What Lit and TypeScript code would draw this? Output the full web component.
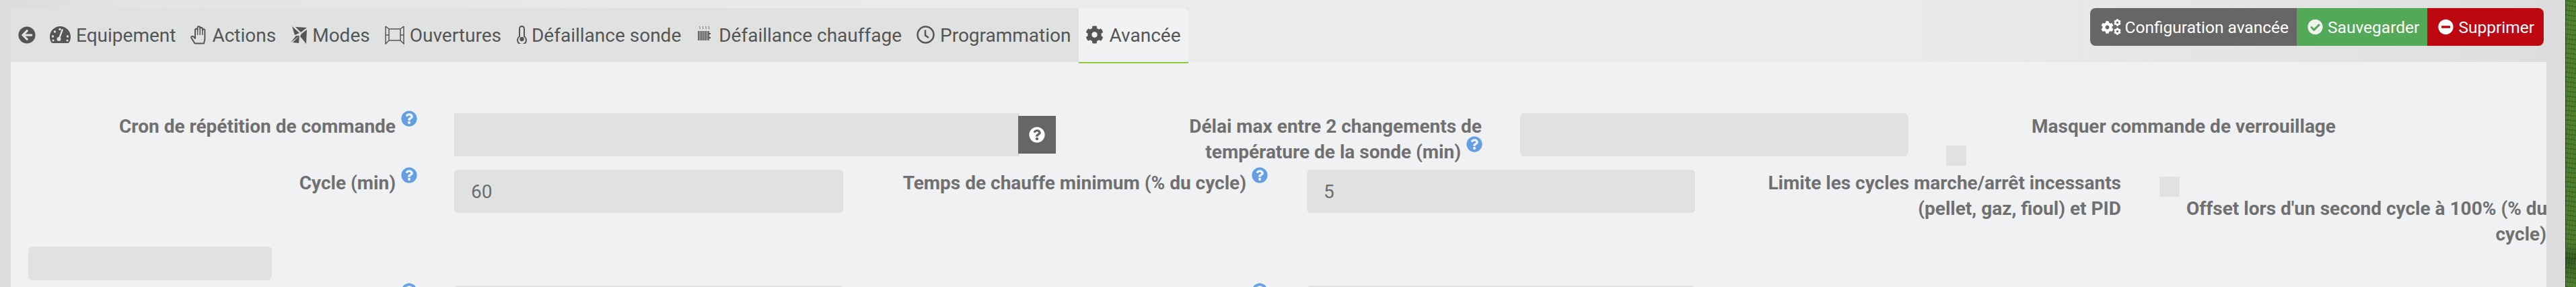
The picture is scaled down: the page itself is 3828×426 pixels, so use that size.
import { LitElement, html, css } from "lit";
import { customElement } from "lit/decorators.js";

const CIRCLE_LEFT = "M256 504C119 504 8 393 8 256S119 8 256 8s248 111 248 248-111 248-248 248zm28.9-143.6L209.4 288H392c13.3 0 24-10.7 24-24v-16c0-13.3-10.7-24-24-24H209.4l75.5-72.4c9.7-9.3 9.9-24.8.4-34.3l-11-10.9c-9.4-9.4-24.6-9.4-33.9 0L107.7 239c-9.4 9.4-9.4 24.6 0 33.9l132.7 132.7c9.4 9.4 24.6 9.4 33.9 0l11-10.9c9.5-9.5 9.3-25-.4-34.3z";
const CHECK = "M504 256c0 136.967-111.033 248-248 248S8 392.967 8 256 119.033 8 256 8s248 111.033 248 248zM227.314 387.314l184-184c6.248-6.248 6.248-16.379 0-22.627l-22.627-22.627c-6.248-6.249-16.379-6.249-22.628 0L216 308.118l-70.059-70.059c-6.248-6.248-16.379-6.248-22.628 0l-22.627 22.627c-6.248 6.248-6.248 16.379 0 22.627l104 104c6.249 6.249 16.379 6.249 22.628.001z";
const MINUS = "M256 8C119 8 8 119 8 256s111 248 248 248 248-111 248-248S393 8 256 8zM124 296c-6.6 0-12-5.4-12-12v-56c0-6.6 5.4-12 12-12h264c6.6 0 12 5.4 12 12v56c0 6.6-5.4 12-12 12H124z";
const QUESTION = "M504 256c0 136.997-111.043 248-248 248S8 392.997 8 256C8 119.083 119.043 8 256 8s248 111.083 248 248zM262.655 90c-54.497 0-89.255 22.957-116.549 63.758-3.536 5.286-2.353 12.415 2.715 16.258l34.699 26.31c5.205 3.947 12.621 3.008 16.665-2.122 17.864-22.658 30.113-35.797 57.303-35.797 20.429 0 45.698 13.148 45.698 32.958 0 14.976-12.363 22.667-32.534 33.976C247.128 238.528 216 254.941 216 296v4c0 6.627 5.373 12 12 12h56c6.627 0 12-5.373 12-12v-1.333c0-28.462 83.186-29.647 83.186-106.667 0-58.002-60.165-102-116.531-102zM256 338c-25.365 0-46 20.635-46 46 0 25.364 20.635 46 46 46s46-20.636 46-46c0-25.365-20.635-46-46-46z";
const COG = "M487.4 315.7l-42.6-24.6c4.3-23.2 4.3-47 0-70.2l42.6-24.6c4.9-2.8 7.1-8.6 5.5-14-11.1-35.6-30-67.8-54.7-94.6-3.8-4.1-10-5.1-14.8-2.3L380.8 110c-17.9-15.4-38.5-27.3-60.8-35.1V25.8c0-5.6-3.9-10.5-9.4-11.7-36.7-8.2-74.3-7.8-109.2 0-5.5 1.2-9.4 6.1-9.4 11.7V75c-22.2 7.9-42.8 19.8-60.8 35.1L88.7 85.5c-4.9-2.8-11-1.9-14.8 2.3-24.7 26.7-43.6 58.9-54.7 94.6-1.7 5.4.6 11.2 5.5 14L67.3 221c-4.3 23.2-4.3 47 0 70.2l-42.6 24.6c-4.9 2.8-7.1 8.6-5.5 14 11.1 35.6 30 67.8 54.7 94.6 3.8 4.1 10 5.1 14.8 2.3l42.6-24.6c17.9 15.4 38.5 27.3 60.8 35.1v49.2c0 5.6 3.9 10.5 9.4 11.7 36.7 8.2 74.3 7.8 109.2 0 5.5-1.2 9.4-6.1 9.4-11.7v-49.2c22.2-7.9 42.8-19.8 60.8-35.1l42.6 24.6c4.9 2.8 11 1.9 14.8-2.3 24.7-26.7 43.6-58.9 54.7-94.6 1.5-5.5-.7-11.3-5.6-14.1zM256 336c-44.1 0-80-35.9-80-80s35.9-80 80-80 80 35.9 80 80-35.9 80-80 80z";

const solid = (d: string, cls: string) =>
  html`<svg class=${cls} viewBox="0 0 512 512"><path fill="currentColor" d=${d}></path></svg>`;

const dashboard = html`<svg class="ic dash" viewBox="0 0 31 25">
  <path fill="currentColor" d="M15.5 0C7 0 0 7 0 15.5c0 2.7.6 5.200 1.700 7.500.5 1.200 1.500 2 2.800 2h22c1.300 0 2.300-.8 2.800-2 1.100-2.300 1.700-4.800 1.700-7.500C31 7 24 0 15.500 0z"></path>
  <g fill="#e0e2e1"><circle cx="15" cy="4.500" r="1.700"></circle><circle cx="7.500" cy="8" r="1.700"></circle><circle cx="4.500" cy="15" r="1.700"></circle><circle cx="5" cy="21" r="1.500"></circle><circle cx="26.500" cy="15" r="1.700"></circle><circle cx="26" cy="21" r="1.500"></circle><circle cx="13.500" cy="19" r="3"></circle></g>
  <path d="M14 18 19 4.500" stroke="#e0e2e1" stroke-width="2.400"></path>
</svg>`;

const hand = html`<svg class="ic handi" viewBox="0 0 25 28">
  <path fill="none" stroke="currentColor" stroke-width="2" stroke-linejoin="round" d="M6.500 26.500 1.500 18.500c-1.200-2 1.600-3.800 3-2L7 19V6.500a1.800 1.800 0 0 1 3.600 0V3a1.800 1.800 0 0 1 3.600 0v1.500a1.800 1.800 0 0 1 3.600 0V7a1.800 1.800 0 0 1 3.600 0v12.500c0 2.500-1.200 4.500-1.400 7z"></path>
  <path stroke="currentColor" stroke-width="1.500" d="M10.600 6.500V14M14.200 4.500V14M17.800 6.500V14"></path>
</svg>`;

const modes = html`<svg class="ic modes" viewBox="0 0 24 26">
  <g fill="currentColor"><polygon points="2,0 13,10 6,13"></polygon><polygon points="7,1 24,2 15,9"></polygon><polygon points="0,24 8,14 13,14"></polygon><polygon points="13,14 12,25 3,24"></polygon><polygon points="16,11 24,5 23,26 14,15"></polygon></g>
</svg>`;

const windowIc = html`<svg class="ic win" viewBox="0 0 29 28">
  <path fill="none" stroke="currentColor" stroke-width="1.500" d="M6 5H23V22H6ZM1 1 6 5M1 1V27L6 22M28 1 23 5M28 1V27L23 22M1 14H6M23 14H28"></path>
</svg>`;

const thermo = html`<svg class="ic therm" viewBox="0 0 17 27">
  <path fill="none" stroke="currentColor" stroke-width="2" d="M5 16V4.500a3.500 3.500 0 0 1 7 0V16a6.500 6.500 0 1 1-7 0z"></path>
  <circle cx="8.500" cy="20" r="3.200" fill="currentColor"></circle>
</svg>`;

const radiator = html`<svg class="ic rad" viewBox="0 0 19 22">
  <path stroke="currentColor" stroke-width="1.700" fill="none" d="M1 7V21M3.500 7V21M6 7V21M8.500 7V21M11 7V21M13.500 7V21M16 7V21"></path>
  <path fill="currentColor" d="M16 10h3v2h-3zM16 16h3v2h-3z"></path>
  <path stroke="currentColor" stroke-width=".9" fill="none" d="M3 0c-1 1 1 2 0 4M7.500 0c-1 1 1 2 0 4M12 0c-1 1 1 2 0 4M16.500 0c-1 1 1 2 0 4"></path>
</svg>`;

const clock = html`<svg class="ic clock" viewBox="0 0 27 27">
  <circle cx="13.500" cy="13.500" r="12" fill="none" stroke="currentColor" stroke-width="2.500"></circle>
  <path d="M13 6.500V14.500L18 18" fill="none" stroke="currentColor" stroke-width="2.500"></path>
</svg>`;

const cogs = html`<svg class="ic cogs" viewBox="0 0 30 24">
  <svg x="0" y="3" width="19" height="19" viewBox="0 0 512 512"><path fill="currentColor" d=${COG}></path></svg>
  <svg x="19" y="0" width="11" height="11" viewBox="0 0 512 512"><path fill="currentColor" d=${COG}></path></svg>
  <svg x="19" y="13" width="11" height="11" viewBox="0 0 512 512"><path fill="currentColor" d=${COG}></path></svg>
</svg>`;

@customElement("help-dot")
export class HelpDot extends LitElement {
  static styles = css`
    :host { display: inline-block; width: 23px; height: 24px; margin-left: 8px; position: relative; top: -9px; color: #649fe4; }
    svg { display: block; width: 24px; height: 24px; margin-left: -0.5px; }
  `;
  render() {
    return html`<svg viewBox="0 0 512 512"><path fill="currentColor" d=${QUESTION}></path></svg>`;
  }
}

@customElement("app-root")
export class AppRoot extends LitElement {
  static styles = css`
    :host {
      display: flex; width: 100%; height: 426px; overflow: hidden;
      font-family: Roboto, "Liberation Sans", sans-serif; font-size: 28px; line-height: 38px;
      background: linear-gradient(90deg, #dcdcdc 0, #e4e4e4 200px, #ebebeb 1400px, #ebebeb 2800px, #e0e0e0 3700px, #dcdcdc 3812px);
    }
    .main { flex: 1; min-width: 0; padding: 12px 28px 0 16px; box-sizing: border-box; display: flex; flex-direction: column; }
    .grass {
      width: 16px; flex: none; border-left: 1px solid #2c3a22; box-sizing: border-box;
      background:
        repeating-linear-gradient(8deg, rgba(20,50,10,.25) 0 2px, transparent 2px 7px),
        repeating-linear-gradient(95deg, rgba(150,190,70,.18) 0 1px, transparent 1px 4px),
        linear-gradient(180deg, #4a7f2c, #47782b 85%, #2f5420 90%, #4c7f2e);
    }
    .head { display: flex; height: 80px; flex: none; align-items: flex-start; }
    .tabs { display: flex; height: 80px; background: #e0e2e1; border-radius: 6px 0 0 0; }
    .tab {
      display: flex; align-items: center; gap: 8px; padding: 1px 11px 0; box-sizing: border-box;
      color: #555; white-space: nowrap; position: relative;
    }
    .tab.active { background: #f0f1f3; border-radius: 0 6px 0 0; z-index: 1; padding-left: 10px; padding-right: 12px; gap: 9px; }
    .tab.active::after { content: ""; position: absolute; left: 0; right: 0; bottom: -2px; height: 2px; background: #93c83a; }
    .tab.radtab { padding-left: 14px; gap: 12px; }
    .tab.tight-hand { gap: 7px; }
    .tab.tight-therm { gap: 6px; }
    .tab.backtab { padding-right: 10px; }
    .ic { flex: none; display: block; margin-top: -2px; }
    .dash { width: 31px; height: 25px; }
    .handi { width: 25px; height: 28px; }
    .modes { width: 24px; height: 26px; }
    .win { width: 29px; height: 28px; }
    .therm { width: 17px; height: 27px; }
    .clock { width: 27px; height: 27px; }
    .cogs { width: 30px; height: 24px; }
    .rad { width: 19px; height: 22px; margin-top: -6px; }
    .back { width: 26px; height: 26px; flex: none; margin-top: -2px; }
    .gear { width: 27px; height: 27px; flex: none; margin-top: -2px; }
    .actions { margin-left: auto; margin-right: 4px; display: flex; height: 56px; border-radius: 8px; overflow: hidden; color: #fff; font-size: 24.5px; }
    .btn { display: flex; align-items: center; gap: 7px; padding: 2px 12px 0 16px; white-space: nowrap; }
    .btn .i { width: 23px; height: 24px; flex: none; margin-top: -2px; }
    .dark { background: #666; gap: 6px; }
    .green { background: #53a957; }
    .green .i { color: #eef3ee; }
    .red { background: #bd0711; padding-right: 14px; }
    .panel { flex: 1; min-height: 0; background: #f0f1f3; padding-top: 76px; overflow: hidden; }
    .row { display: grid; justify-content: start; }
    .r1 { height: 84px; grid-template-columns: 603px 56px 894px 633px 57px 577px 56px 30px 97px 450px; }
    .r2 { height: 114px; grid-template-columns: 603px 56px 578px 630px 59px 577px 633px 57px 30px 10px 535px; }
    .r3 { height: 58px; padding-left: 26px; }
    .r4 { height: 64px; grid-template-columns: 603px 56px 578px 630px 59px 577px; }
    .lbl { color: #707070; font-weight: 700; text-align: right; padding-top: 1px; white-space: nowrap; }
    .offset { padding-top: 39px; overflow: hidden; }
    .field {
      display: block; box-sizing: border-box; width: 100%; height: 64px; border: 0; margin: 0;
      background: #e0e2e1; border-radius: 6px; padding: 0 25px; color: #6c6c6c;
      font: 400 28px Roboto, "Liberation Sans", sans-serif; outline: none;
    }
    .group { display: flex; align-items: center; height: 64px; }
    .group .field { width: 840px; flex: none; border-radius: 0; }
    .addon { width: 56px; height: 56px; flex: none; margin-left: -2px; background: #666; color: #fff; display: flex; align-items: center; justify-content: center; position: relative; }
    .addon svg { width: 24px; height: 24px; display: block; }
    .check { width: 30px; height: 30px; background: #e0e2e1; }
    .c1 { margin-top: 48px; }
    .c2 { margin-top: 10px; }
    .small { width: 362px; height: 50px; }
  `;

  render() {
    return html`
      <div class="main">
        <div class="head">
          <nav class="tabs">
            <div class="tab backtab">${solid(CIRCLE_LEFT, "back")}</div>
            <div class="tab">${dashboard}<span>Equipement</span></div>
            <div class="tab tight-hand">${hand}<span>Actions</span></div>
            <div class="tab">${modes}<span>Modes</span></div>
            <div class="tab">${windowIc}<span>Ouvertures</span></div>
            <div class="tab tight-therm">${thermo}<span>Défaillance sonde</span></div>
            <div class="tab radtab">${radiator}<span>Défaillance chauffage</span></div>
            <div class="tab">${clock}<span>Programmation</span></div>
            <div class="tab active">${solid(COG, "gear")}<span>Avancée</span></div>
          </nav>
          <div class="actions">
            <div class="btn dark">${cogs}<span>Configuration avancée</span></div>
            <div class="btn green">${solid(CHECK, "i")}<span>Sauvegarder</span></div>
            <div class="btn red">${solid(MINUS, "i")}<span>Supprimer</span></div>
          </div>
        </div>
        <section class="panel">
          <div class="row r1">
            <div class="lbl">Cron de répétition de commande<help-dot></help-dot></div>
            <div></div>
            <div class="group">
              <input class="field" />
              <div class="addon">${solid(QUESTION, "")}</div>
            </div>
            <div class="lbl">Délai max entre 2 changements de<br />température de la sonde (min)<help-dot></help-dot></div>
            <div></div>
            <input class="field" />
            <div></div>
            <div class="check c1"></div>
            <div></div>
            <div class="lbl">Masquer commande de verrouillage</div>
          </div>
          <div class="row r2">
            <div class="lbl">Cycle (min)<help-dot></help-dot></div>
            <div></div>
            <input class="field" .value=${"60"} />
            <div class="lbl">Temps de chauffe minimum (% du cycle)<help-dot></help-dot></div>
            <div></div>
            <input class="field" .value=${"5"} />
            <div class="lbl">Limite les cycles marche/arrêt incessants<br />(pellet, gaz, fioul) et PID</div>
            <div></div>
            <div class="check c2"></div>
            <div></div>
            <div class="lbl offset">Offset lors d'un second cycle à 100% (% du<br />cycle)</div>
          </div>
          <div class="row r3"><input class="field small" /></div>
          <div class="row r4">
            <div class="lbl">&nbsp;<help-dot></help-dot></div>
            <div></div>
            <input class="field" />
            <div class="lbl">&nbsp;<help-dot></help-dot></div>
            <div></div>
            <input class="field" />
          </div>
        </section>
      </div>
      <div class="grass"></div>
    `;
  }
}
